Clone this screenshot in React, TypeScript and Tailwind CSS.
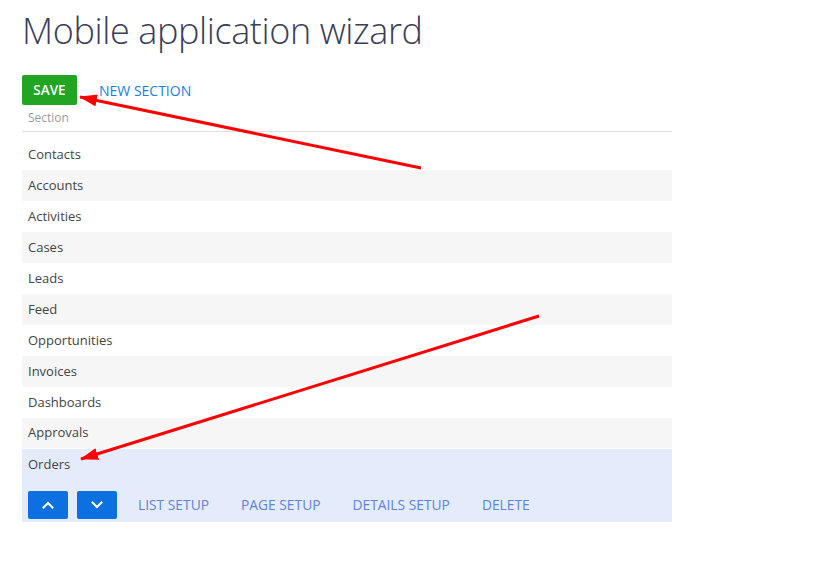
import React from "react";

const sections = [
  "Contacts",
  "Accounts",
  "Activities",
  "Cases",
  "Leads",
  "Feed",
  "Opportunities",
  "Invoices",
  "Dashboards",
  "Approvals",
];

const actions = ["LIST SETUP", "PAGE SETUP", "DETAILS SETUP", "DELETE"];

function Chevron({ up }: { up?: boolean }) {
  return (
    <svg width="12" height="8" viewBox="0 0 12 8" fill="none">
      <path
        d={up ? "M1.5 6.5 L6 2 L10.5 6.5" : "M1.5 1.5 L6 6 L10.5 1.5"}
        stroke="white"
        strokeWidth="2"
        strokeLinecap="square"
      />
    </svg>
  );
}

export default function App() {
  return (
    <div
      className="relative w-[833px] h-[578px] bg-white overflow-hidden"
      style={{ fontFamily: '"Open Sans", "Noto Sans", sans-serif' }}
    >
      <div className="px-[22px] pt-[6px]">
        <h1 className="text-[36px] leading-[50px] font-light tracking-[-0.4px] text-[#3a3d57]">
          Mobile application wizard
        </h1>

        <div className="mt-[19px] flex items-center">
          <button className="w-[55px] h-[30px] rounded-[2px] bg-[#22a522] text-white text-[13.5px] font-semibold">
            SAVE
          </button>
          <span className="ml-[22px] text-[14px] text-[#1b7ee6]">NEW SECTION</span>
        </div>

        <div className="w-[650px]">
          <div className="h-[27px] flex items-center pl-[6px] text-[12px] text-[#9a9a9a] border-b border-[#e0e0e0]">
            Section
          </div>

          <div className="mt-[7px] flex flex-col">
            {sections.map((name, i) => (
              <div
                key={name}
                className={`h-[31px] flex items-center pl-[6px] text-[13px] text-[#444] ${
                  i % 2 === 1 ? "bg-[#f6f6f6]" : "bg-white"
                } ${i === sections.length - 1 ? "border-b border-white" : ""}`}
              >
                {name}
              </div>
            ))}

            <div className="bg-[#e4ebfa] pb-[3px]">
              <div className="h-[31px] flex items-center pl-[6px] text-[13px] text-[#444]">
                Orders
              </div>
              <div className="mt-[11px] flex items-center pl-[6px]">
                <button className="w-[40px] h-[28px] rounded-[2px] bg-[#0d70e0] flex items-center justify-center">
                  <Chevron up />
                </button>
                <button className="ml-[9px] w-[40px] h-[28px] rounded-[2px] bg-[#0d70e0] flex items-center justify-center">
                  <Chevron />
                </button>
                <div className="ml-[21px] flex items-center gap-[32px] text-[13.8px] text-[#5f84d8]">
                  {actions.map((a) => (
                    <span key={a}>{a}</span>
                  ))}
                </div>
              </div>
            </div>
          </div>
        </div>
      </div>

      {/* callout arrows drawn over the page */}
      <svg
        className="absolute left-0 top-0 pointer-events-none"
        width="833"
        height="578"
        viewBox="0 0 833 578"
      >
        <defs>
          <marker
            id="head"
            markerUnits="userSpaceOnUse"
            markerWidth="18"
            markerHeight="12"
            refX="17"
            refY="6"
            orient="auto"
          >
            <path d="M0 0 L18 6 L0 12 Z" fill="#ff0000" />
          </marker>
        </defs>
        <line x1="421" y1="168" x2="80" y2="97" stroke="#ff0000" strokeWidth="3" markerEnd="url(#head)" />
        <line x1="539" y1="316" x2="81" y2="459" stroke="#ff0000" strokeWidth="3" markerEnd="url(#head)" />
      </svg>
    </div>
  );
}
